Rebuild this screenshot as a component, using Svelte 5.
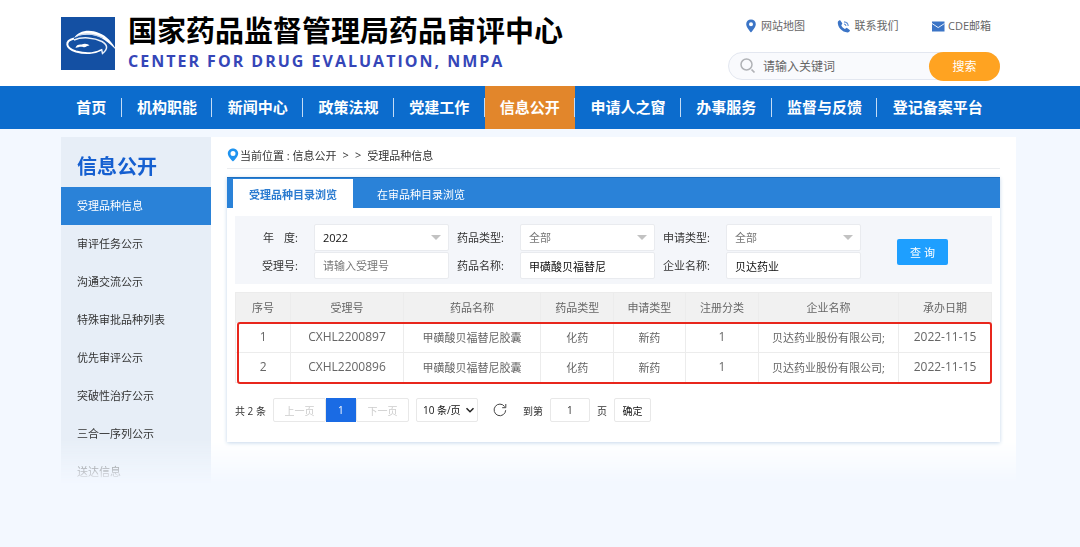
<script>
  const navItems = ['首页', '机构职能', '新闻中心', '政策法规', '党建工作', '信息公开', '申请人之窗', '办事服务', '监督与反馈', '登记备案平台'];
  const sideItems = ['受理品种信息', '审评任务公示', '沟通交流公示', '特殊审批品种列表', '优先审评公示', '突破性治疗公示', '三合一序列公示', '送达信息'];
  const columns = [
    { title: '序号', share: 7.3, latin: true },
    { title: '受理号', share: 14.9, latin: true },
    { title: '药品名称', share: 18.2 },
    { title: '药品类型', share: 9.6 },
    { title: '申请类型', share: 9.5 },
    { title: '注册分类', share: 9.7, latin: true },
    { title: '企业名称', share: 18.5 },
    { title: '承办日期', share: 12.3, latin: true }
  ];
  const rows = [
    ['1', 'CXHL2200897', '甲磺酸贝福替尼胶囊', '化药', '新药', '1', '贝达药业股份有限公司;', '2022-11-15'],
    ['2', 'CXHL2200896', '甲磺酸贝福替尼胶囊', '化药', '新药', '1', '贝达药业股份有限公司;', '2022-11-15']
  ];
  let year = $state('2022');
  let acceptNo = $state('');
  let drugName = $state('甲磺酸贝福替尼');
  let company = $state('贝达药业');
  let page = $state('1');
</script>

<header class="top">
  <div class="brand">
    <svg class="logo" viewBox="0 0 56 54" aria-hidden="true">
      <rect width="54" height="53" y="1" fill="#1450a3" />
      <path d="M13 22C17 15 28 12.500 38 17C46 20 51 26 56 35C48 26 40 20.500 31 19C24 18 17 19 13 22Z" fill="#fff" />
      <path d="M15 21C22 16 33 17.500 42 22" fill="none" stroke="#a9c2e4" stroke-width=".8" />
      <path d="M13 22.500C3.500 25 4 32 15 35.500C24 38 34 37.500 40 34" fill="none" stroke="#fff" stroke-width="2" />
      <path d="M13 24C21 20.500 33 21.500 41 25.500C47 29 47 33 41.500 37.500L40.500 33" fill="none" stroke="#e9f0fa" stroke-width="1.500" />
      <path d="M14.500 32C15 29 18 28 20.500 28.500C24 27 27 28 28.500 29.500C26 29.500 24.500 32 22 31C19 30.500 17 31.500 14.500 32Z" fill="#fff" />
    </svg>
    <div class="names">
      <h1>国家药品监督管理局药品审评中心</h1>
      <p>CENTER FOR DRUG EVALUATION, NMPA</p>
    </div>
  </div>
  <div class="tools">
    <div class="links">
      <a href="#map">
        <svg viewBox="0 0 14 14" aria-hidden="true"><path fill-rule="evenodd" d="M7 .5C4.200.5 2.200 2.500 2.200 5.200C2.200 8.400 7 13.500 7 13.500S11.800 8.400 11.800 5.200C11.800 2.500 9.800.5 7 .5ZM7 3.200A2 2 0 1 1 7 7.200A2 2 0 0 1 7 3.200Z" fill="#3b74c6" /></svg>
        网站地图
      </a>
      <a href="#contact">
        <svg viewBox="0 0 14 14" aria-hidden="true">
          <path d="M.8 3C1.200 1.800 2.300 1.200 3.200 1.200L5.400 4.500L4.300 6.200C4.900 7.800 6.300 9.200 7.900 9.900L9.700 8.700L13 11.200C12.700 12.600 11.800 13.300 10.600 13.400C5 13.200 .4 8 .8 3Z" fill="#3b74c6" />
          <path d="M7 5Q8.800 5.200 9 7M7 2.900Q10.900 3.200 11.200 7" fill="none" stroke="#5d8dd2" stroke-width="1.100" />
        </svg>
        联系我们
      </a>
      <a href="#mail">
        <svg viewBox="0 0 14 14" aria-hidden="true"><rect x="1" y="2.500" width="12.500" height="10" fill="#3b74c6" /><path d="M1 4.500L7.200 8.600L13.500 4.500" fill="none" stroke="#e8f0fb" stroke-width="1" /></svg>
        CDE邮箱
      </a>
    </div>
    <form class="search" onsubmit={(e) => e.preventDefault()}>
      <svg viewBox="0 0 16 16" aria-hidden="true"><circle cx="6.500" cy="6.500" r="5.500" fill="none" stroke="#b0b2b6" stroke-width="1.500" /><path d="M11.500 11.500L14.500 14.500" stroke="#b0b2b6" stroke-width="1.700" /></svg>
      <input type="text" placeholder="请输入关键词" aria-label="请输入关键词" />
      <button>搜索</button>
    </form>
  </div>
</header>

<nav class="nav">
  {#each navItems as item}
    <a href="#nav" class:active={item === '信息公开'}>{item}</a>
  {/each}
</nav>

<div class="layout">
  <aside>
    <h2>信息公开</h2>
    {#each sideItems as item, i}
      <a href="#side" class:active={i === 0}>{item}</a>
    {/each}
  </aside>
  <main>
    <div class="crumb">
      <svg viewBox="0 0 12 14" aria-hidden="true"><path fill-rule="evenodd" d="M6 .5C3 .5.8 2.700.8 5.500C.8 9 6 13.500 6 13.500S11.200 9 11.200 5.500C11.200 2.700 9 .5 6 .5ZM6 3A2.500 2.500 0 1 1 6 8A2.500 2.500 0 0 1 6 3Z" fill="#1f93ef" /></svg>
      <span>当前位置 : <a href="#open">信息公开</a></span>
      <span>&gt;</span>
      <span>&gt;</span>
      <span>受理品种信息</span>
    </div>
    <section class="card">
      <div class="tabs">
        <button class="active">受理品种目录浏览</button>
        <button>在审品种目录浏览</button>
      </div>
      <form class="filter" onsubmit={(e) => e.preventDefault()}>
        <label for="year"><span class="year">年<span>度:</span></span></label>
        <div class="drop"><select id="year" bind:value={year}><option>2022</option></select></div>
        <label for="kind">药品类型:</label>
        <div class="drop"><select id="kind" class="muted"><option>全部</option></select></div>
        <label for="apply">申请类型:</label>
        <div class="drop"><select id="apply" class="muted"><option>全部</option></select></div>
        <button class="query">查 询</button>
        <label for="no">受理号:</label>
        <input id="no" type="text" placeholder="请输入受理号" bind:value={acceptNo} />
        <label for="drug">药品名称:</label>
        <input id="drug" type="text" bind:value={drugName} />
        <label for="company">企业名称:</label>
        <input id="company" type="text" bind:value={company} />
      </form>
      <div class="grid">
        <table>
          <colgroup>
            {#each columns as c}<col style:width="{c.share}%" />{/each}
          </colgroup>
          <thead>
            <tr>{#each columns as c}<th>{c.title}</th>{/each}</tr>
          </thead>
          <tbody>
            {#each rows as r}
              <tr>{#each r as cell, i}<td class:latin={columns[i].latin}>{cell}</td>{/each}</tr>
            {/each}
          </tbody>
        </table>
        <div class="mark"></div>
      </div>
      <div class="pager">
        <span>共 2 条</span>
        <div class="pages">
          <button disabled>上一页</button>
          <button class="current">1</button>
          <button disabled>下一页</button>
        </div>
        <div class="size">
          <select aria-label="每页条数"><option>10 条/页</option></select>
          <svg viewBox="0 0 10 10" aria-hidden="true"><path d="M1.500 3.200L5 6.700L8.500 3.200" fill="none" stroke="#222" stroke-width="1.500" /></svg>
        </div>
        <button class="refresh" aria-label="刷新">
          <svg viewBox="0 0 14 14" aria-hidden="true"><path d="M12.700 7.200A5.800 5.800 0 1 1 11.600 3.500M12.800 1V4.700H9.200" fill="none" stroke="#444" stroke-width="1" /></svg>
        </button>
        <label for="page">到第</label>
        <input id="page" type="text" bind:value={page} />
        <span>页</span>
        <button class="go">确定</button>
      </div>
    </section>
  </main>
</div>

<style>
  :global(body) {
    margin: 0;
    background: #f3f8ff;
    font-family: "Open Sans", "Noto Sans CJK SC", sans-serif;
    font-size: 11px;
    color: #333;
  }
  :global(*) { box-sizing: border-box; }
  a { color: inherit; text-decoration: none; }
  button, input, select { font: inherit; color: inherit; margin: 0; }
  button { border: 0; padding: 0; background: none; cursor: pointer; }
  svg { flex: none; display: block; }

  .top {
    display: flex;
    justify-content: space-between;
    height: 86px;
    padding: 0 80px 0 61px;
    background: #fff;
  }
  .brand { display: flex; gap: 11px; padding-top: 16px; }
  .logo { width: 56px; height: 54px; }
  .names h1 {
    margin: 0;
    font-size: 29px;
    line-height: 30px;
    font-weight: 700;
    color: #000;
    white-space: nowrap;
  }
  .names p {
    margin: 4px 0 0;
    font-size: 16px;
    line-height: 22px;
    font-weight: 700;
    letter-spacing: 2px;
    color: #3546b8;
    white-space: nowrap;
  }
  .tools { width: 272px; }
  .links {
    display: flex;
    justify-content: space-between;
    padding: 18px 9px 0 16px;
    line-height: 16px;
    color: #666;
  }
  .links a { display: flex; align-items: center; gap: 3px; }
  .links svg { width: 14px; height: 14px; }
  .search {
    display: flex;
    align-items: center;
    height: 28px;
    margin-top: 18px;
    padding-left: 11px;
    border: 1px solid #e3e7f0;
    border-radius: 14px;
    background: #f9fafd;
  }
  .search svg { width: 16px; height: 16px; }
  .search input {
    flex: 1;
    min-width: 0;
    padding: 0 7px;
    border: 0;
    background: none;
    font-size: 12px;
    outline: none;
  }
  .search input::placeholder { color: #666; }
  .search button {
    width: 71px;
    height: 29px;
    margin-right: -1px;
    border-radius: 15px;
    background: #ffa321;
    color: #fff;
    font-size: 12px;
  }

  .nav {
    display: flex;
    height: 43px;
    padding: 0 82px 0 61px;
    background: #0c6ccd;
    color: #fff;
    font-size: 15px;
    font-weight: 700;
  }
  .nav a {
    flex: 1 0 auto;
    position: relative;
    padding: 0 14px;
    line-height: 42px;
    text-align: center;
    white-space: nowrap;
  }
  .nav a:not(:last-child)::after {
    content: "";
    position: absolute;
    right: 0;
    top: 12px;
    height: 19px;
    border-right: 1px solid #c5dcf5;
  }
  .nav .active { background: #e2862b; }

  .layout {
    display: flex;
    margin: 8px 64px 0 61px;
    mask-image: linear-gradient(#000 calc(100% - 44px), transparent);
  }
  aside { width: 150px; background: #e7eef7; height: 347px; overflow: hidden; }
  aside h2 {
    margin: 0;
    padding: 9px 16px 0;
    font-size: 20px;
    line-height: 41px;
    font-weight: 700;
    color: #155fd0;
  }
  aside a { display: block; padding: 0 16px; line-height: 38px; }
  aside .active { background: #2a82d8; color: #fff; }

  main { flex: 1; min-width: 0; padding: 0 16px; background: #fff; }
  .crumb {
    display: flex;
    align-items: center;
    gap: 6px;
    height: 32px;
    padding-top: 4px;
    border-bottom: 1px solid #ebedf0;
  }
  .crumb svg { width: 12px; height: 14px; margin-right: -5px; }
  .card {
    margin-top: 8px;
    padding-bottom: 20px;
    box-shadow: 0 1px 4px #c3d6ea;
    background: #fff;
  }
  .tabs {
    display: flex;
    height: 31px;
    padding: 2px 6px 0;
    background: #2a82d8;
    box-shadow: inset 0 1px #1f70c0;
    color: #fff;
  }
  .tabs button { width: 120px; white-space: nowrap; }
  .tabs button + button { width: 136px; }
  .tabs .active { background: #fff; color: #2a7bd0; font-weight: 700; }

  .filter {
    display: grid;
    grid-template-columns: 79px 1fr 71px 1fr 71px 1fr 131px;
    grid-template-rows: 27px 27px;
    row-gap: 1px;
    margin: 8px 8px 0;
    padding: 8px 0 5px;
    background: #f4f6fa;
    align-items: center;
  }
  .filter label { padding-right: 16px; text-align: right; line-height: 27px; white-space: nowrap; }
  .year span { margin-left: 10px; }
  .drop { position: relative; }
  .drop::after {
    content: "";
    position: absolute;
    right: 8px;
    top: 11px;
    border: 5px solid transparent;
    border-top-color: #c2c2c2;
    border-bottom: 0;
    pointer-events: none;
  }
  .filter input, .filter select {
    display: block;
    width: 100%;
    min-width: 0;
    height: 27px;
    padding: 0 8px;
    border: 1px solid #e9ebef;
    border-radius: 2px;
    background: #fff;
    appearance: none;
    color: #111;
  }
  .filter .muted { color: #777; }
  .filter input::placeholder { color: #777; }
  .query {
    grid-column: 7;
    grid-row: 1 / 3;
    justify-self: center;
    width: 51px;
    height: 26px;
    margin-right: 8px;
    border-radius: 2px;
    background: #1e9fff;
    color: #fff;
  }

  .grid { position: relative; margin: 8px 8px 0; }
  table {
    width: 100%;
    table-layout: fixed;
    border-collapse: collapse;
    color: #666;
  }
  th, td {
    height: 30px;
    padding: 0 0 2px;
    border: 1px solid #ececec;
    font-weight: 400;
    text-align: center;
    white-space: nowrap;
  }
  th { background: #f1f1f1; }
  .latin { font-size: 12px; }
  .mark {
    position: absolute;
    inset: 30px 0 -1px 2px;
    border: 2px solid #e8261c;
    border-radius: 3px;
    pointer-events: none;
  }

  .pager {
    display: flex;
    align-items: center;
    gap: 7px;
    margin: 15px 8px 0;
    font-size: 10px;
    white-space: nowrap;
  }
  .pager button, .pager input, .size select {
    height: 24px;
    border: 1px solid #e8e8e8;
    border-radius: 2px;
    background: #fff;
  }
  .pages { display: flex; }
  .pages button { width: 53px; color: #ccc; }
  .pages .current { width: 30px; border-color: #1a6be4; background: #1a6be4; color: #fff; border-radius: 0; }
  .size { position: relative; }
  .size select { width: 62px; padding: 0 6px; appearance: none; color: #111; }
  .size svg { position: absolute; right: 3px; top: 7px; width: 10px; height: 10px; pointer-events: none; }
  .pager .refresh { width: 31px; border: 0; padding: 0 8px; }
  .refresh svg { width: 14px; height: 14px; }
  .pager input { width: 40px; padding: 0; text-align: center; }
  .pager .go { width: 37px; color: #111; }
</style>
